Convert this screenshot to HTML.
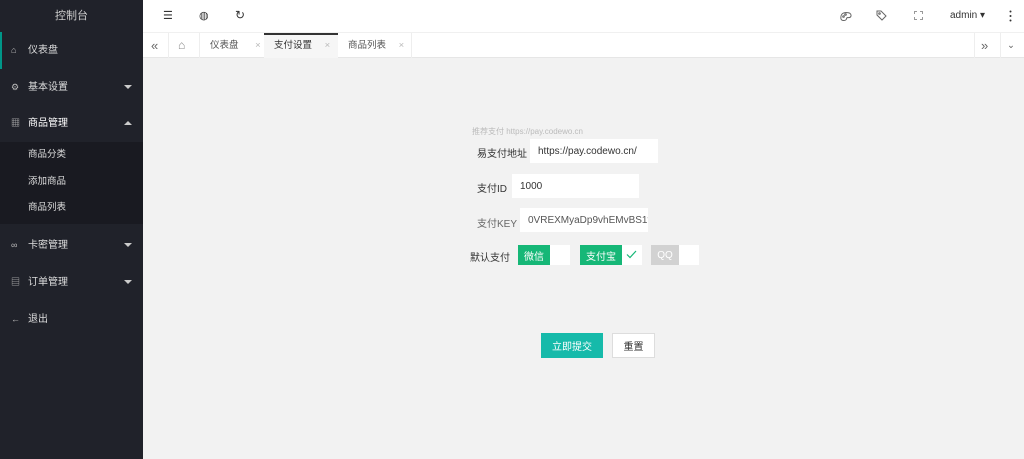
<!DOCTYPE html>
<html><head><meta charset="utf-8"><style>
*{margin:0;padding:0;box-sizing:border-box}
body{width:1024px;height:459px;overflow:hidden;font-family:"Liberation Sans","Noto Sans CJK SC",sans-serif;font-size:10px;background:#f2f2f2;position:relative;color:#333}
.side{position:absolute;left:0;top:0;width:143px;height:459px;background:#20222a;color:#ddd}
.logo{height:33px;line-height:33px;text-align:center;color:#ccc;font-size:11px;background:#20222a}
.mi{position:absolute;left:0;width:143px;height:37px;line-height:37px;padding-left:28px;font-size:10px;color:#ddd}
.mi i{position:absolute;left:11px;font-style:normal;font-size:9px;color:#bbb}
.arr{position:absolute;right:11px;top:16px;width:0;height:0;border-left:4px solid transparent;border-right:4px solid transparent;border-top:4px solid #ccc}
.up{border-top:none;border-bottom:4px solid #ccc}
.sub{position:absolute;left:0;top:142px;width:143px;height:82px;background:#191a21}
.sub div{height:26.5px;line-height:26px;padding-left:28px;font-size:9.5px;color:#ddd}
.top{position:absolute;left:143px;top:0;right:0;height:33px;background:#fff;border-bottom:1px solid #f0f0f0}
.tabs{position:absolute;left:143px;top:33px;right:0;height:25px;background:#fff;border-bottom:1px solid #e6e6e6;font-size:9.5px;color:#555}
.tab{position:absolute;top:0;height:25px;line-height:25px}
.inp{position:absolute;background:#fff;height:24px;display:flex;align-items:center;padding-left:8px;font-size:10px;color:#333}
.lbl{position:absolute;font-size:10px;color:#333}
.tg{display:flex;align-items:center;justify-content:center;color:#fff;height:20px}
</style></head><body>
<div class="side">
<div class="logo">控制台</div>
<div class="mi" style="top:32px;height:37px;background:#20222a"><span style="position:absolute;left:0;top:0;width:2px;height:37px;background:#009688"></span><i>⌂</i>仪表盘</div>
<div class="mi" style="top:69px"><i>⚙</i>基本设置<span class="arr"></span></div>
<div class="mi" style="top:105px;color:#fff"><i>▦</i>商品管理<span class="arr up"></span></div>
<div class="sub"><div>商品分类</div><div>添加商品</div><div>商品列表</div></div>
<div class="mi" style="top:227px"><i>∞</i>卡密管理<span class="arr"></span></div>
<div class="mi" style="top:264px"><i>▤</i>订单管理<span class="arr"></span></div>
<div class="mi" style="top:301px"><i>←</i>退出</div>
</div>
<div class="top">
<span style="position:absolute;left:20px;top:9px;font-size:11px">☰</span>
<span style="position:absolute;left:56px;top:9px;font-size:11px">◍</span>
<span style="position:absolute;left:92px;top:8px;font-size:12px">↻</span>
<svg style="position:absolute;left:697px;top:11px" width="12" height="10" viewBox="0 0 12 10" fill="none" stroke="#666" stroke-width="1"><path d="M1 8 Q0 2 6 1.5 Q11.5 1.5 11 5 Q10.5 7 8 6.5 Q6.5 6.5 6.5 8 Q6 9.5 3.5 9.5 Q1.5 9.5 1 8Z"/><circle cx="3.5" cy="5.5" r="0.8"/><circle cx="5.5" cy="3.5" r="0.8"/></svg>
<svg style="position:absolute;left:733px;top:10px" width="11" height="11" viewBox="0 0 11 11" fill="none" stroke="#666" stroke-width="1"><path d="M1 1 H5 L10 6 L6 10 L1 5Z"/><circle cx="3.5" cy="3.5" r="0.8"/></svg>
<svg style="position:absolute;left:771px;top:11px" width="9" height="9" viewBox="0 0 9 9" fill="none" stroke="#999" stroke-width="1"><path d="M0.5 3V0.5H3M6 0.5H8.5V3M8.5 6V8.5H6M3 8.5H0.5V6"/></svg>
<span style="position:absolute;left:807px;top:10px;font-size:10px">admin ▾</span>
<svg style="position:absolute;left:866px;top:10px" width="3" height="12"><circle cx="1.5" cy="1.5" r="1" fill="#333"/><circle cx="1.5" cy="6" r="1" fill="#333"/><circle cx="1.5" cy="10.5" r="1" fill="#333"/></svg>
</div>
<div class="tabs">
<span class="tab" style="left:8px;font-size:13px;color:#666">«</span>
<span style="position:absolute;left:25px;top:0;width:1px;height:25px;background:#eee"></span>
<span class="tab" style="left:35px;font-size:12px;color:#888">⌂</span>
<span style="position:absolute;left:56px;top:0;width:1px;height:25px;background:#eee"></span>
<span class="tab" style="left:67px">仪表盘 <span style="margin-left:14px;color:#bbb">×</span></span>
<div class="tab" style="left:121px;width:74px;background:#f6f6f6;border-top:2px solid #333;padding-left:10px;line-height:22px;color:#333">支付设置 <span style="margin-left:10px;color:#bbb">×</span></div>
<span class="tab" style="left:205px">商品列表 <span style="margin-left:10px;color:#bbb">×</span></span>
<span style="position:absolute;left:268px;top:0;width:1px;height:25px;background:#eee"></span>
<span style="position:absolute;left:831px;top:0;width:1px;height:25px;background:#eee"></span>
<span class="tab" style="left:838px;font-size:13px;color:#666">»</span>
<span style="position:absolute;left:857px;top:0;width:1px;height:25px;background:#eee"></span>
<span class="tab" style="left:864px;color:#666">⌄</span>
</div>
<div class="lbl" style="left:472px;top:126px;font-size:8px;color:#bbb">推荐支付 https://pay.codewo.cn</div>
<div class="lbl" style="left:477px;top:145px">易支付地址</div>
<div class="inp" style="left:530px;top:139px;width:128px">https://pay.codewo.cn/</div>
<div class="lbl" style="left:477px;top:180px">支付ID</div>
<div class="inp" style="left:512px;top:174px;width:127px">1000</div>
<div class="lbl" style="left:477px;top:215px;color:#666">支付KEY</div>
<div class="inp" style="left:520px;top:208px;width:128px;color:#555;overflow:hidden;white-space:nowrap">0VREXMyaDp9vhEMvBS1f</div>
<div class="lbl" style="left:470px;top:249px">默认支付</div>
<div style="position:absolute;left:518px;top:245px;width:52px;height:20px;background:#fff"><div class="tg" style="width:32px;background:#16b777">微信</div></div>
<div style="position:absolute;left:580px;top:245px;width:62px;height:20px;background:#fff"><div class="tg" style="width:42px;background:#16b777">支付宝</div><svg style="position:absolute;left:46px;top:5px" width="11" height="9"><path d="M1 4.5 L4 7.5 L10 1" fill="none" stroke="#16b777" stroke-width="1.2"/></svg></div>
<div style="position:absolute;left:651px;top:245px;width:48px;height:20px;background:#fff"><div class="tg" style="width:28px;background:#d2d2d2">QQ</div></div>
<div class="tg" style="position:absolute;left:541px;top:333px;width:62px;height:25px;background:#16baaa">立即提交</div>
<div class="tg" style="position:absolute;left:612px;top:333px;width:43px;height:25px;background:#fff;border:1px solid #ddd;color:#333">重置</div>
</body></html>
